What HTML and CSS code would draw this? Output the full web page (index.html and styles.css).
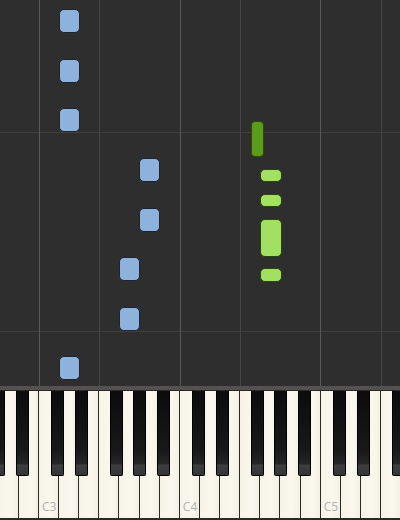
FILE: index.html
```html
<!DOCTYPE html>
<html>
<head>
<meta charset="utf-8">
<link rel="stylesheet" href="styles.css">
</head>
<body>
<div class="app">
  <div class="roll">
    <div class="note blue" style="left:59px;top:9px;height:24px"></div>
    <div class="note blue" style="left:59px;top:59px;height:24px"></div>
    <div class="note blue" style="left:59px;top:108px;height:24px"></div>
    <div class="note blue" style="left:139px;top:158px;height:24px"></div>
    <div class="note blue" style="left:139px;top:208px;height:24px"></div>
    <div class="note blue" style="left:119px;top:257px;height:24px"></div>
    <div class="note blue" style="left:119px;top:307px;height:24px"></div>
    <div class="note blue" style="left:59px;top:356px;height:24px"></div>
    <div class="note dkgreen" style="left:251px;top:121px;height:36px"></div>
    <div class="note green" style="left:260px;top:169px;height:13px"></div>
    <div class="note green" style="left:260px;top:194px;height:13px"></div>
    <div class="note green" style="left:260px;top:219px;height:38px"></div>
    <div class="note green" style="left:260px;top:268px;height:14px"></div>
  </div>
  <div class="band"></div>
  <div class="keyboard">
    <div class="whites">
      <div class="wk"></div><div class="wk"></div>
      <div class="wk"><span class="lbl">C3</span></div><div class="wk"></div><div class="wk"></div><div class="wk"></div><div class="wk"></div><div class="wk"></div><div class="wk"></div>
      <div class="wk"><span class="lbl">C4</span></div><div class="wk"></div><div class="wk"></div><div class="wk"></div><div class="wk"></div><div class="wk"></div><div class="wk"></div>
      <div class="wk"><span class="lbl">C5</span></div><div class="wk"></div><div class="wk"></div><div class="wk"></div><div class="wk"></div>
    </div>
    <div class="bk" style="left:-8px"></div>
    <div class="bk" style="left:16px"></div>
    <div class="bk" style="left:51px"></div>
    <div class="bk" style="left:75px"></div>
    <div class="bk" style="left:110px"></div>
    <div class="bk" style="left:133px"></div>
    <div class="bk" style="left:157px"></div>
    <div class="bk" style="left:192px"></div>
    <div class="bk" style="left:216px"></div>
    <div class="bk" style="left:251px"></div>
    <div class="bk" style="left:274px"></div>
    <div class="bk" style="left:298px"></div>
    <div class="bk" style="left:333px"></div>
    <div class="bk" style="left:357px"></div>
    <div class="bk" style="left:392px"></div>
  </div>
</div>
</body>
</html>
```
FILE: styles.css
```css
html, body {
  margin: 0;
  padding: 0;
  background: #2e2e2e;
  overflow: hidden;
}
.app {
  width: 400px;
  height: 520px;
  display: flex;
  flex-direction: column;
  font-family: "Open Sans", "DejaVu Sans", sans-serif;
}
.roll {
  position: relative;
  height: 386px;
  flex: none;
  background-color: #2e2e2e;
  background-image:
    linear-gradient(to right,
      transparent 39px, #5a5a5a 39px, #5a5a5a 40px, transparent 40px,
      transparent 99px, #464646 99px, #464646 100px, transparent 100px,
      transparent 180px, #5a5a5a 180px, #5a5a5a 181px, transparent 181px,
      transparent 240px, #464646 240px, #464646 241px, transparent 241px,
      transparent 320px, #5a5a5a 320px, #5a5a5a 321px, transparent 321px,
      transparent 381px, #464646 381px, #464646 382px, transparent 382px),
    linear-gradient(to bottom,
      transparent 132px, #404040 132px, #404040 133px, transparent 133px,
      transparent 331px, #404040 331px, #404040 332px, transparent 332px);
}
.note {
  position: absolute;
  box-sizing: border-box;
  border-radius: 5px;
}
.blue {
  width: 21px;
  background: #8db3dc;
  border: 1.5px solid #1b2431;
}
.dkgreen {
  width: 13px;
  background: #5b9d18;
  border: 1.5px solid #2b4a0c;
  border-radius: 4px;
}
.green {
  width: 22px;
  background: #a2e062;
  border: 1.5px solid #27450c;
}
.band {
  height: 4px;
  flex: none;
  background: #525252;
  border-bottom: 1px solid #3b2020;
}
.keyboard {
  position: relative;
  flex: 1;
  overflow: hidden;
  background: #222;
}
.whites {
  display: flex;
  height: 100%;
  margin-left: -1.3px;
}
.wk {
  position: relative;
  flex: none;
  width: 20.14px;
  box-sizing: border-box;
  height: 100%;
  background: linear-gradient(to right, #f6f4e6 0%, #faf8ee 60%, #f3f1e3 100%);
  border-right: 1px solid #2a2a2a;
  border-bottom: 2px solid #2a2a2a;
}
.lbl {
  position: absolute;
  left: 3px;
  bottom: 5px;
  font-size: 12px;
  color: #b3b3b3;
  line-height: 1;
}
.bk {
  position: absolute;
  top: 0;
  width: 12.5px;
  height: 85px;
  box-sizing: border-box;
  background: linear-gradient(to bottom, #0c0c0c 0%, #181818 70%, #262626 87%, #3e3e3e 88%, #353535 100%);
  border-left: 1px solid #000;
  border-right: 1px solid #000;
  border-bottom: 1px solid #000;
  border-radius: 0 0 2px 2px;
}
```
